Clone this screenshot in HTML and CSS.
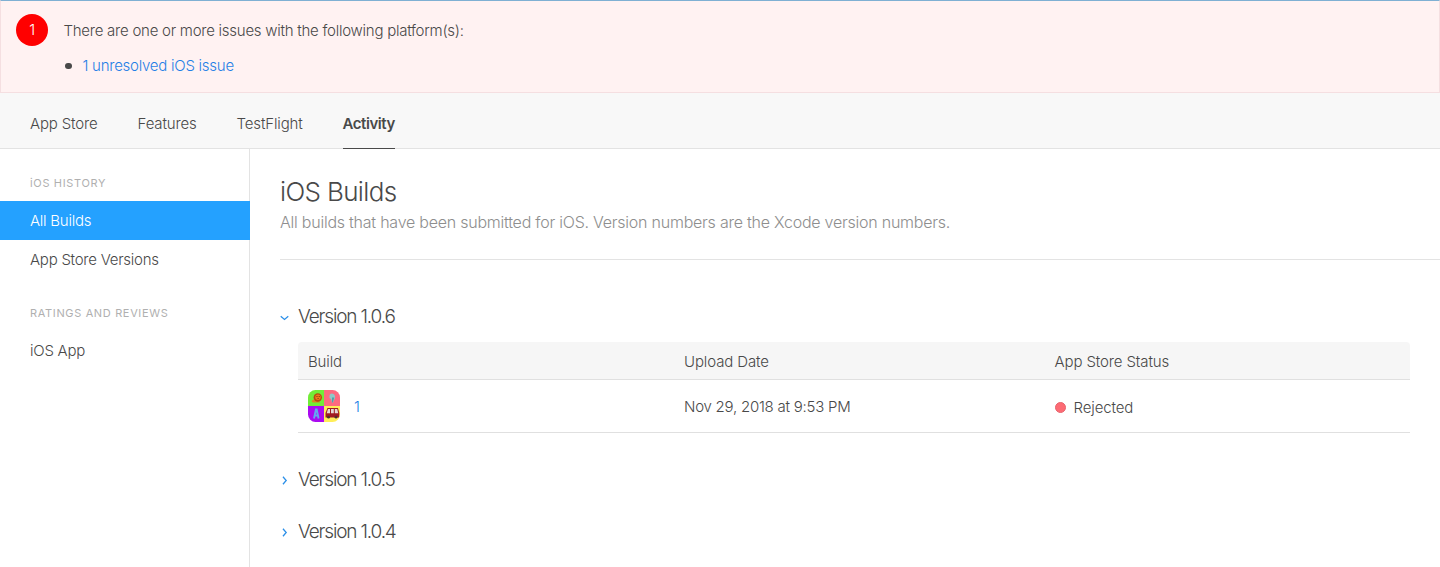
FILE: index.html
```html
<!DOCTYPE html>
<html lang="en">
<head>
<meta charset="utf-8">
<title>iOS Builds</title>
<link rel="stylesheet" href="styles.css">
</head>
<body>
<div class="alert">
  <span class="alert-count">1</span>
  <div class="alert-body">
    <p class="alert-text">There are one or more issues with the following platform(s):</p>
    <ul class="alert-list"><li><a class="link">1 unresolved iOS issue</a></li></ul>
  </div>
</div>
<nav class="tabs">
  <a class="tab">App Store</a>
  <a class="tab">Features</a>
  <a class="tab">TestFlight</a>
  <a class="tab tab-active">Activity</a>
</nav>
<div class="layout">
  <aside class="sidebar">
    <h2 class="side-title">iOS HISTORY</h2>
    <a class="side-link side-active">All Builds</a>
    <a class="side-link">App Store Versions</a>
    <h2 class="side-title side-title-next">RATINGS AND REVIEWS</h2>
    <a class="side-link">iOS App</a>
  </aside>
  <main class="main">
    <header class="page-head">
      <h1 class="title">iOS Builds</h1>
      <p class="subtitle">All builds that have been submitted for iOS. Version numbers are the Xcode version numbers.</p>
    </header>
    <section class="version">
      <h3 class="version-name">
        <svg class="chevron" viewBox="0 0 10 10"><path d="M.8 3.700 5 7.200 9.200 3.700"/></svg><span>Version 1.0.6</span>
      </h3>
      <div class="table">
        <div class="row row-head">
          <span>Build</span><span>Upload Date</span><span>App Store Status</span>
        </div>
        <div class="row row-build">
          <span class="build">
            <svg class="app-icon" viewBox="0 0 32 32">
              <defs><clipPath id="round"><rect width="32" height="32" rx="7.5"/></clipPath></defs>
              <g clip-path="url(#round)">
                <path fill="#72ec37" d="M0 0h16v16H0z"/>
                <path fill="#fd6a80" d="M16 0h16v16H16z"/>
                <path fill="#aa0af0" d="M0 16h16v16H0z"/>
                <path fill="#ffee58" d="M16 16h16v16H16z"/>
                <path fill="#d98a1c" d="M4 10.500q3-2 6-.5l2 2.500H5q-2-.5-1-2z"/>
                <circle cx="9.800" cy="7.500" r="4.200" fill="#b8480f"/>
                <circle cx="10" cy="7.200" r="2.700" fill="#ee7a1a"/>
                <path fill="#7a3410" d="M8.500 6h1v1h-1zM10.700 6h1v1h-1zM9.400 8.300h1.400v.8H9.400z"/>
                <path fill="#8fc8c8" d="M21.500 6q0-2.500 2.500-2.500T27 6v2l-2 4.500h-1L23 9l-1.500-1z"/>
                <path fill="#4f9faa" d="M24 7.500h2.300L24.800 12.500H24z"/>
                <path fill="none" stroke="#62a8ef" stroke-width="1.900" d="M6 28.500 7.900 19.500h.8l1.900 9M6.700 25.500h3.500"/>
                <path fill="#a01c20" d="M19.500 18H30l1.300 5v4.500H17.500V23z"/>
                <path fill="#e4d9d6" d="M20 19h2v4.200h-3.300zM23 19h2.800v4.200H23zM26.800 19h2.400l1.100 4.200h-3.500z"/>
                <circle cx="20.500" cy="27.200" r="1.400" fill="#493030"/>
                <circle cx="28" cy="27.200" r="1.400" fill="#493030"/>
              </g>
            </svg>
            <a class="link">1</a>
          </span>
          <span class="date">Nov 29, 2018 at 9:53 PM</span>
          <span class="status"><i class="dot"></i><span>Rejected</span></span>
        </div>
      </div>
    </section>
    <section class="version version-closed">
      <h3 class="version-name"><svg class="chevron" viewBox="0 0 10 10"><path d="M3.300.8 6.900 5 3.300 9.200"/></svg><span>Version 1.0.5</span></h3>
    </section>
    <section class="version version-closed">
      <h3 class="version-name"><svg class="chevron" viewBox="0 0 10 10"><path d="M3.300.8 6.900 5 3.300 9.200"/></svg><span>Version 1.0.4</span></h3>
    </section>
  </main>
</div>
</body>
</html>
```

FILE: styles.css
```css
* { box-sizing: border-box; }
body {
  margin: 0;
  height: 567px;
  overflow: hidden;
  display: flex;
  flex-direction: column;
  background: #fff;
  color: #494949;
  font: 300 15px/20px Inter, "Liberation Sans", sans-serif;
  letter-spacing: -.25px;
}
h1, h2, h3, p, ul { margin: 0; padding: 0; font-weight: 300; }
.link { color: #1f7fe6; }

.alert {
  display: flex;
  gap: 15.5px;
  height: 93px;
  padding: 13px 15px 0;
  background: #fff2f2;
  border: 1px solid #f5dfe1;
  border-top-color: #7fb0d3;
}
.alert-count {
  width: 32px;
  height: 32px;
  border-radius: 50%;
  background: #f00;
  color: #fff;
  line-height: 32px;
  text-align: center;
}
.alert-text { padding-top: 7px; }
.alert-list { list-style: none; padding-top: 15px; }
.alert-list li { display: flex; align-items: center; gap: 11px; padding-left: 1.5px; }
.alert-list li::before {
  content: "";
  width: 6.5px;
  height: 6.5px;
  border-radius: 50%;
  background: #494949;
}

.tabs {
  display: flex;
  gap: 40px;
  height: 56px;
  padding: 0 30px;
  background: #f8f8f8;
  border-bottom: 1px solid #e3e3e3;
  letter-spacing: -.15px;
}
.tab { height: 56px; padding-top: 21px; }
.tab-active { font-weight: 600; letter-spacing: -.45px; border-bottom: 1px solid #494949; }

.layout { display: flex; flex: 1; }
.sidebar {
  width: 250px;
  padding-top: 24px;
  border-right: 1px solid #e3e3e3;
}
.side-title {
  padding: 0 30px;
  color: #b0b0b0;
  font-size: 11px;
  font-weight: 400;
  letter-spacing: .65px;
  margin-bottom: 8px;
}
.side-title-next { margin-top: 24px; }
.side-link { display: block; height: 39px; padding: 0 30px; line-height: 39px; }
.side-active { margin-right: -1px; background: #24a1ff; color: #fff; }

.main { flex: 1; padding: 26px 0 0 30px; }
.page-head { height: 85px; border-bottom: 1px solid #e3e3e3; }
.title { font-size: 26px; line-height: 34px; letter-spacing: -.65px; }
.subtitle { color: #8e8e8e; font-size: 16px; line-height: 24px; padding-top: 1px; letter-spacing: -.235px; }

.version { padding: 44px 30px 0 0; }
.version-closed { padding-top: 26px; }
.version-name {
  display: flex;
  align-items: center;
  gap: 9px;
  font-size: 19px;
  line-height: 26px;
  letter-spacing: -1.15px;
}
.chevron { width: 9px; height: 9px; fill: none; stroke: #2b8fe8; stroke-width: 1.4; }
.table { margin: 12px 0 8px 18px; letter-spacing: -.12px; }
.row {
  display: grid;
  grid-template-columns: 376px 370.5px 1fr;
  align-items: center;
  padding-left: 10px;
  border-bottom: 1px solid #e0e0e0;
}
.row-head { height: 38px; padding-top: 2px; background: #f6f6f6; border-radius: 4px 4px 0 0; }
.row-build { height: 53px; }
.build, .status { display: flex; align-items: center; }
.build { gap: 14px; }
.build .link { padding-top: 2px; }
.app-icon { width: 32px; height: 32px; }
.date { letter-spacing: -.24px; padding-top: 2px; }
.status { gap: 8px; padding-top: 3px; }
.dot { width: 11px; height: 11px; border-radius: 50%; background: #fd6b74; border: 1px solid #e8636c; }
```
